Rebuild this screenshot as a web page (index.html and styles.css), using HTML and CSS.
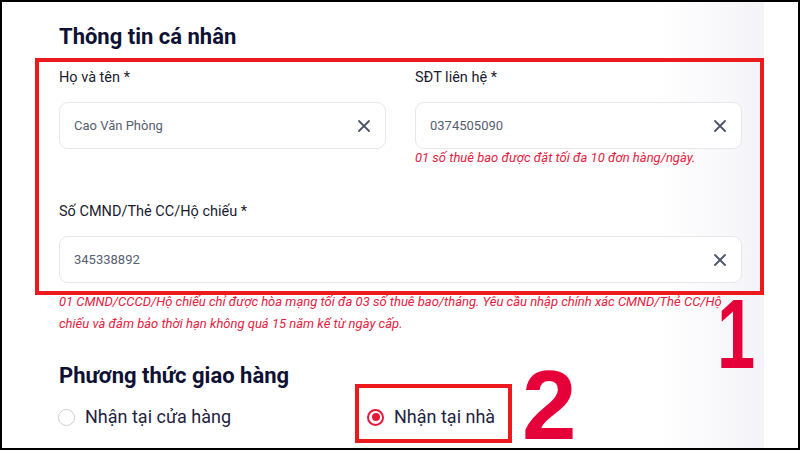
FILE: index.html
```html
<!DOCTYPE html>
<html lang="vi">
<head>
<meta charset="utf-8">
<title>Thông tin cá nhân</title>
<link rel="stylesheet" href="styles.css">
</head>
<body>
<div class="frame">
  <div class="page">
    <h2 class="title">Thông tin cá nhân</h2>
    <div class="mark-box">
      <div class="grid">
        <div class="field">
          <label class="label">Họ và tên *</label>
          <div class="input"><span class="value">Cao Văn Phòng</span><svg class="clear" viewBox="0 0 14 14"><path d="M2 2L12 12M12 2L2 12"/></svg></div>
        </div>
        <div class="field">
          <label class="label">SĐT liên hệ *</label>
          <div class="input"><span class="value">0374505090</span><svg class="clear" viewBox="0 0 14 14"><path d="M2 2L12 12M12 2L2 12"/></svg></div>
          <p class="hint">01 số thuê bao được đặt tối đa 10 đơn hàng/ngày.</p>
        </div>
        <div class="field wide">
          <label class="label">Số CMND/Thẻ CC/Hộ chiếu *</label>
          <div class="input"><span class="value">345338892</span><svg class="clear" viewBox="0 0 14 14"><path d="M2 2L12 12M12 2L2 12"/></svg></div>
        </div>
      </div>
    </div>
    <p class="hint long">01 CMND/CCCD/Hộ chiếu chỉ được hòa mạng tối đa 03 số thuê bao/tháng. Yêu cầu nhập chính xác CMND/Thẻ CC/Hộ chiếu và đảm bảo thời hạn không quá 15 năm kể từ ngày cấp.</p>
    <h2 class="title title2">Phương thức giao hàng</h2>
    <div class="options">
      <div class="option"><span class="radio"></span><span class="opt-text">Nhận tại cửa hàng</span></div>
      <div class="option marked"><span class="radio checked"></span><span class="opt-text">Nhận tại nhà</span></div>
    </div>
    <span class="num num1">1</span>
    <span class="num num2">2</span>
  </div>
</div>
</body>
</html>
```
FILE: styles.css
```css
* { box-sizing: border-box; }
html, body { margin: 0; padding: 0; background: #fff; }
.frame {
  width: 800px;
  height: 450px;
  border: 2px solid #000;
  overflow: hidden;
  background: #fff;
  font-family: Roboto, "Liberation Sans", sans-serif;
}
.page {
  position: relative;
  width: 762px;
  height: 100%;
  padding: 20px 0 0 33px;
  background: linear-gradient(to right, #ffffff 0%, #ffffff 86%, #f4f4f8 100%);
}
.title {
  margin: 0 0 6px 24px;
  font-size: 22px;
  line-height: 30px;
  font-weight: 700;
  color: #0e1133;
}
.mark-box {
  width: 729px;
  border: 4px solid #ec1a1d;
  padding: 6px 18px 8px 20px;
}
.grid {
  display: grid;
  grid-template-columns: 327px 327px;
  column-gap: 29px;
  row-gap: 36px;
}
.field.wide { grid-column: 1 / 3; }
.label {
  display: block;
  font-size: 14.5px;
  line-height: 20px;
  color: #1a1b2e;
  margin-bottom: 14px;
}
.input {
  display: flex;
  align-items: center;
  justify-content: space-between;
  height: 47px;
  border: 1px solid #e6e7eb;
  border-radius: 9px;
  padding: 0 14px 0 14px;
  background: #fff;
}
.wide .input { height: 47px; margin-top: 1px; }
.value {
  font-size: 13px;
  color: #566072;
}
.clear {
  width: 14px;
  height: 14px;
  fill: none;
  stroke: #4b5568;
  stroke-width: 1.8;
  stroke-linecap: round;
}
.hint {
  margin: 1px 0 0;
  font-size: 13px;
  line-height: 16px;
  font-style: italic;
  color: #e5213f;
  white-space: nowrap;
}
.hint.long {
  margin: -4px 0 0 24px;
  width: 665px;
  line-height: 22px;
  white-space: normal;
}
.title2 {
  margin: 29px 0 0 24px;
  font-size: 22px;
  line-height: 24px;
}
.options {
  display: flex;
  align-items: center;
  margin: -4px 0 0 10px;
}
.option {
  display: flex;
  align-items: center;
  gap: 10px;
  border: 4px solid transparent;
  padding: 18px 13px 11px 8px;
}
.option:first-child { width: 310px; padding-left: 9px; }
.option.marked { border-color: #ec1a1d; }
.radio {
  width: 17px;
  height: 17px;
  border-radius: 50%;
  border: 1.5px solid #cfcfd3;
  flex: none;
  position: relative;
}
.radio.checked {
  border: 2px solid #e5193a;
}
.radio.checked::after {
  content: "";
  position: absolute;
  left: 50%;
  top: 50%;
  width: 8px;
  height: 8px;
  margin: -4px 0 0 -4px;
  border-radius: 50%;
  background: #e5193a;
}
.opt-text {
  font-size: 18px;
  line-height: 22px;
  color: #1f2340;
}
.num {
  position: absolute;
  font-family: "Liberation Sans", Arial, sans-serif;
  font-weight: 700;
  font-size: 98px;
  line-height: 72px;
  color: #e6003a;
}
.num1 {
  left: 712px;
  top: 296px;
  transform: scaleX(0.7);
  transform-origin: 10px 0;
}
.num2 { left: 520px; top: 367px; }
```
